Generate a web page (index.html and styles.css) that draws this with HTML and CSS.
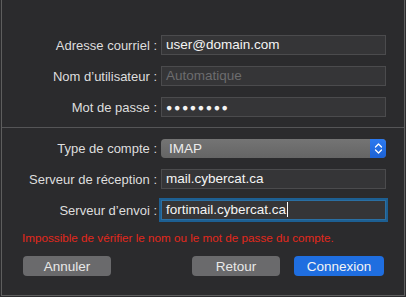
FILE: index.html
```html
<!DOCTYPE html>
<html>
<head>
  <title>Compte</title>
  <link rel="stylesheet" href="styles.css">
</head>
<body>
  <div class="window">
    <div class="fields">
      <label class="field-label">Adresse courriel :</label>
      <div class="text-input">user@domain.com</div>

      <label class="field-label">Nom d’utilisateur :</label>
      <div class="text-input placeholder">Automatique</div>

      <label class="field-label">Mot de passe :</label>
      <div class="text-input password">●●●●●●●●</div>
    </div>

    <div class="separator"></div>

    <div class="fields lower">
      <label class="field-label">Type de compte :</label>
      <div class="select">
        <span class="select-value">IMAP</span>
        <span class="select-arrows">
          <svg width="9" height="13" viewBox="0 0 9 13"><path d="M1.5 5 L4.5 2 L7.5 5 M1.5 8 L4.5 11 L7.5 8" fill="none" stroke="#fff" stroke-width="1.3" stroke-linecap="round" stroke-linejoin="round"/></svg>
        </span>
      </div>

      <label class="field-label">Serveur de réception :</label>
      <div class="text-input">mail.cybercat.ca</div>

      <label class="field-label">Serveur d’envoi :</label>
      <div class="text-input focused">fortimail.cybercat.ca<span class="caret"></span></div>
    </div>

    <p class="error">Impossible de vérifier le nom ou le mot de passe du compte.</p>

    <div class="actions">
      <button class="btn">Annuler</button>
      <span class="spacer"></span>
      <button class="btn">Retour</button>
      <button class="btn primary">Connexion</button>
    </div>
  </div>
</body>
</html>
```

FILE: styles.css
```css
body {
  margin: 0;
  padding: 0;
  background-color: #2c2c2e;
  font-family: "Liberation Sans", Arial, sans-serif;
}

.window {
  box-sizing: border-box;
  width: 404px;
  height: 296px;
  margin-left: 1px;
  padding-top: 35px;
  background-color: #2b2b2d;
  border-left: 1px solid #5e5e5e;
  border-right: 1px solid #5e5e5e;
  border-bottom: 1px solid #5e5e5e;
}

.fields {
  display: grid;
  grid-template-columns: 155px 225px;
  column-gap: 4px;
  row-gap: 11px;
  align-items: center;
}

.fields.lower {
  margin-top: 11px;
}

.field-label {
  text-align: right;
  color: #dedede;
  font-size: 13px;
  white-space: nowrap;
}

.text-input {
  box-sizing: border-box;
  height: 20px;
  padding: 0 4px;
  background-color: #353537;
  border: 1px solid #4b4b4d;
  color: #f4f4f4;
  font-size: 13.5px;
  line-height: 18px;
  white-space: nowrap;
}

.text-input.placeholder {
  color: #6c6c6e;
}

.text-input.password {
  font-size: 10.5px;
  letter-spacing: 1.6px;
}

.text-input.focused {
  border-color: #2a6fa3;
  box-shadow: 0 0 0 2px #1d5f92;
}

.caret {
  display: inline-block;
  width: 1px;
  height: 15px;
  margin-left: 1px;
  vertical-align: -3px;
  background-color: #ffffff;
}

.separator {
  margin-top: 10px;
  height: 1px;
  background-color: #555557;
}

.select {
  display: flex;
  height: 19px;
  border-radius: 4px;
  background: linear-gradient(#747474, #656565);
  overflow: hidden;
}

.select-value {
  flex: 1;
  padding-left: 8px;
  color: #ececec;
  font-size: 13.5px;
  line-height: 19px;
}

.select-arrows {
  display: flex;
  width: 16px;
  align-items: center;
  justify-content: center;
  background: linear-gradient(#2c7af0, #1c62d6);
}

.error {
  margin: 11px 0 0 20px;
  color: #e2281c;
  font-size: 11.7px;
  line-height: 14px;
}

.actions {
  display: flex;
  gap: 14px;
  margin-top: 11px;
  padding: 0 20px 0 21px;
}

.spacer {
  flex: 1;
}

.btn {
  width: 88px;
  height: 20px;
  padding: 0;
  border: none;
  border-radius: 4px;
  background-color: #6a6a6c;
  color: #e8e8e8;
  font-family: "Liberation Sans", Arial, sans-serif;
  font-size: 13.5px;
}

.btn.primary {
  width: 90px;
  background-color: #1f6ee0;
  color: #f4f4f4;
}
```
